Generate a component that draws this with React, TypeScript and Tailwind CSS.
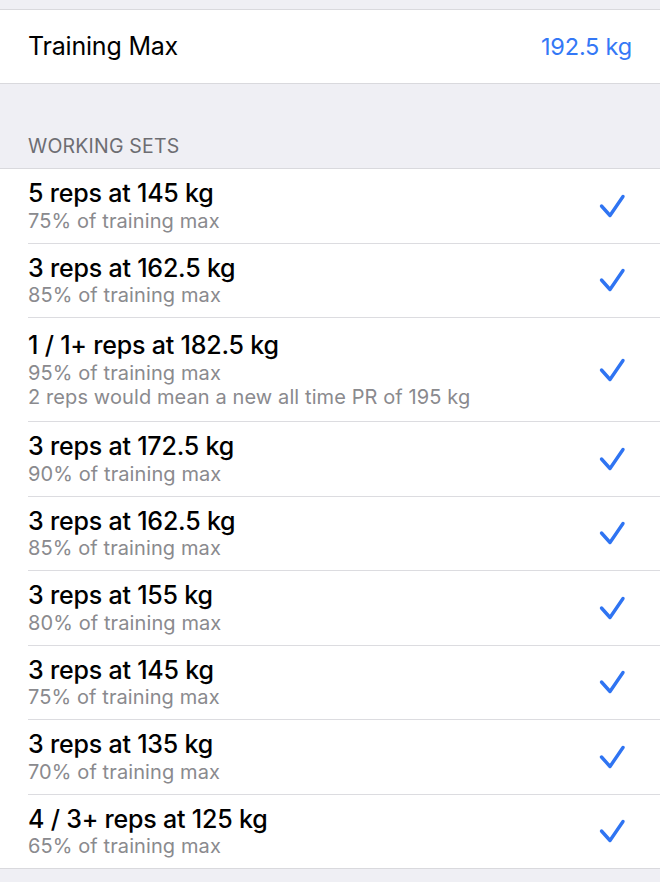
import React from 'react'

type WorkSet = {
    title: string
    lines: string[]
}

const sets: WorkSet[] = [
    { title: '5 reps at 145 kg', lines: ['75% of training max'] },
    { title: '3 reps at 162.5 kg', lines: ['85% of training max'] },
    { title: '1 / 1+ reps at 182.5 kg', lines: ['95% of training max', '2 reps would mean a new all time PR of 195 kg'] },
    { title: '3 reps at 172.5 kg', lines: ['90% of training max'] },
    { title: '3 reps at 162.5 kg', lines: ['85% of training max'] },
    { title: '3 reps at 155 kg', lines: ['80% of training max'] },
    { title: '3 reps at 145 kg', lines: ['75% of training max'] },
    { title: '3 reps at 135 kg', lines: ['70% of training max'] },
    { title: '4 / 3+ reps at 125 kg', lines: ['65% of training max'] },
]

function Check() {
    return (
        <svg width="28" height="28" viewBox="0 0 28 28" className="shrink-0">
            <polyline
                points="3.5,14 12,23.5 25,4.5"
                fill="none"
                stroke="#2f74f2"
                strokeWidth="3.4"
                strokeLinecap="round"
                strokeLinejoin="round"
            />
        </svg>
    )
}

export default function App() {
    return (
        <div className="w-[660px] h-[882px] overflow-hidden bg-[#efeff4] font-['Inter','Noto_Sans',sans-serif] antialiased">
            <div className="h-[9px]" />
            <div className="border-y border-[#d9d9dd] bg-white h-[75px] flex items-center justify-between pl-[28px] pr-[28px]">
                <span className="text-[25px] text-black tracking-[-0.2px]">Training Max</span>
                <span className="text-[23.5px] text-[#3478f6] tracking-[-0.2px]">192.5 kg</span>
            </div>

            <div className="h-[84px] flex items-end pl-[28px] pb-[11px]">
                <span className="text-[19.5px] text-[#6d6d72] tracking-[0.2px] leading-[22px]">WORKING SETS</span>
            </div>

            <div className="bg-white border-y border-[#d9d9dd]">
                {sets.map((s, i) => {
                    const multi = s.lines.length > 1
                    return (
                        <div key={i} className="pl-[28px]">
                            <div
                                className={`flex items-center justify-between pr-[34px] ${multi ? 'pt-[13px] pb-[12.5px]' : 'py-[10px]'} ${i < sets.length - 1 ? 'border-b border-[#dcdce0]' : ''}`}
                            >
                                <div className="flex flex-col">
                                    <span className="text-[25px] leading-[29.5px] font-medium text-black tracking-[-0.2px]">
                                        {s.title}
                                    </span>
                                    {s.lines.map((l) => (
                                        <span key={l} className="text-[20px] leading-[24px] text-[#8a8a8e] tracking-[0.1px]">
                                            {l}
                                        </span>
                                    ))}
                                </div>
                                <Check />
                            </div>
                        </div>
                    )
                })}
            </div>
        </div>
    )
}
